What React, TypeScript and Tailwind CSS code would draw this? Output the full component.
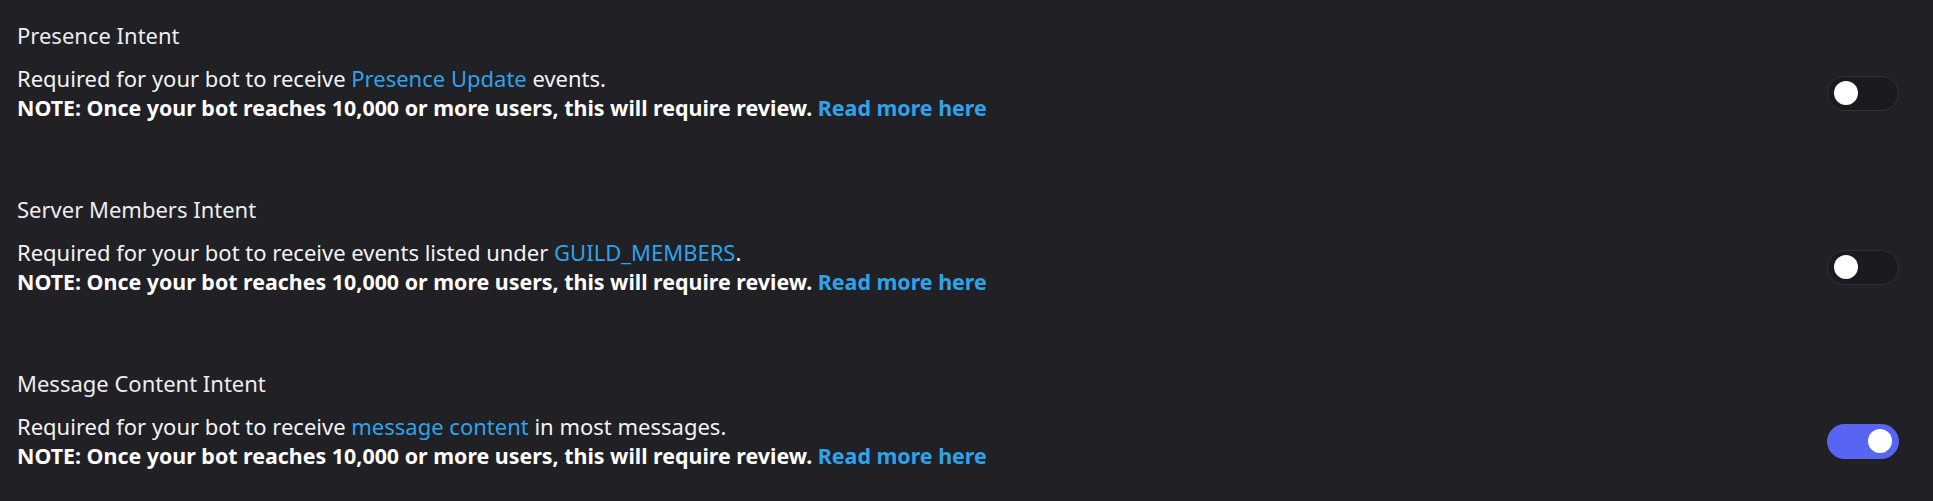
import React, { useState } from 'react';

type Intent = {
  title: string;
  before: string;
  link: string;
  after: string;
  enabled: boolean;
};

const INTENTS: Intent[] = [
  {
    title: 'Presence Intent',
    before: 'Required for your bot to receive ',
    link: 'Presence Update',
    after: ' events.',
    enabled: false,
  },
  {
    title: 'Server Members Intent',
    before: 'Required for your bot to receive events listed under ',
    link: 'GUILD_MEMBERS',
    after: '.',
    enabled: false,
  },
  {
    title: 'Message Content Intent',
    before: 'Required for your bot to receive ',
    link: 'message content',
    after: ' in most messages.',
    enabled: true,
  },
];

function Toggle({ on, onChange }: { on: boolean; onChange: () => void }) {
  return (
    <button
      type="button"
      role="switch"
      aria-checked={on}
      onClick={onChange}
      className={
        on
          ? 'flex h-[35px] w-[72px] shrink-0 items-center justify-end rounded-full border border-[#5865f2] bg-[#5865f2] px-[6px]'
          : 'flex h-[35px] w-[72px] shrink-0 items-center justify-start rounded-full border border-[#303036] bg-[#1b1b1f] px-[6px]'
      }
    >
      <span className="block h-[24px] w-[24px] rounded-full bg-white" />
    </button>
  );
}

function IntentRow({ intent }: { intent: Intent }) {
  const [on, setOn] = useState(intent.enabled);
  return (
    <section className="h-[174px] pt-[21px]">
      <h3 className="text-[22px] leading-[28px] text-[#ededf0]">{intent.title}</h3>
      <div className="mt-[15px] flex items-center justify-between">
        <div className="text-[#f2f3f5]">
          <p className="text-[22px] leading-[28px]">
            {intent.before}
            <a href="#" className="text-[#2ea3ea]">{intent.link}</a>
            {intent.after}
          </p>
          <p className="mt-[2px] text-[21.4px] leading-[28.5px] font-bold text-white">
            NOTE: Once your bot reaches 10,000 or more users, this will require review.{' '}
            <a href="#" className="text-[#2ea3ea]">Read more here</a>
          </p>
        </div>
        <Toggle on={on} onChange={() => setOn(!on)} />
      </div>
    </section>
  );
}

export default function App() {
  return (
    <div className="h-[501px] overflow-hidden bg-[#202025] pl-[17px] pr-[34px] font-['Noto_Sans',sans-serif]">
      {INTENTS.map((intent) => (
        <IntentRow key={intent.title} intent={intent} />
      ))}
    </div>
  );
}
